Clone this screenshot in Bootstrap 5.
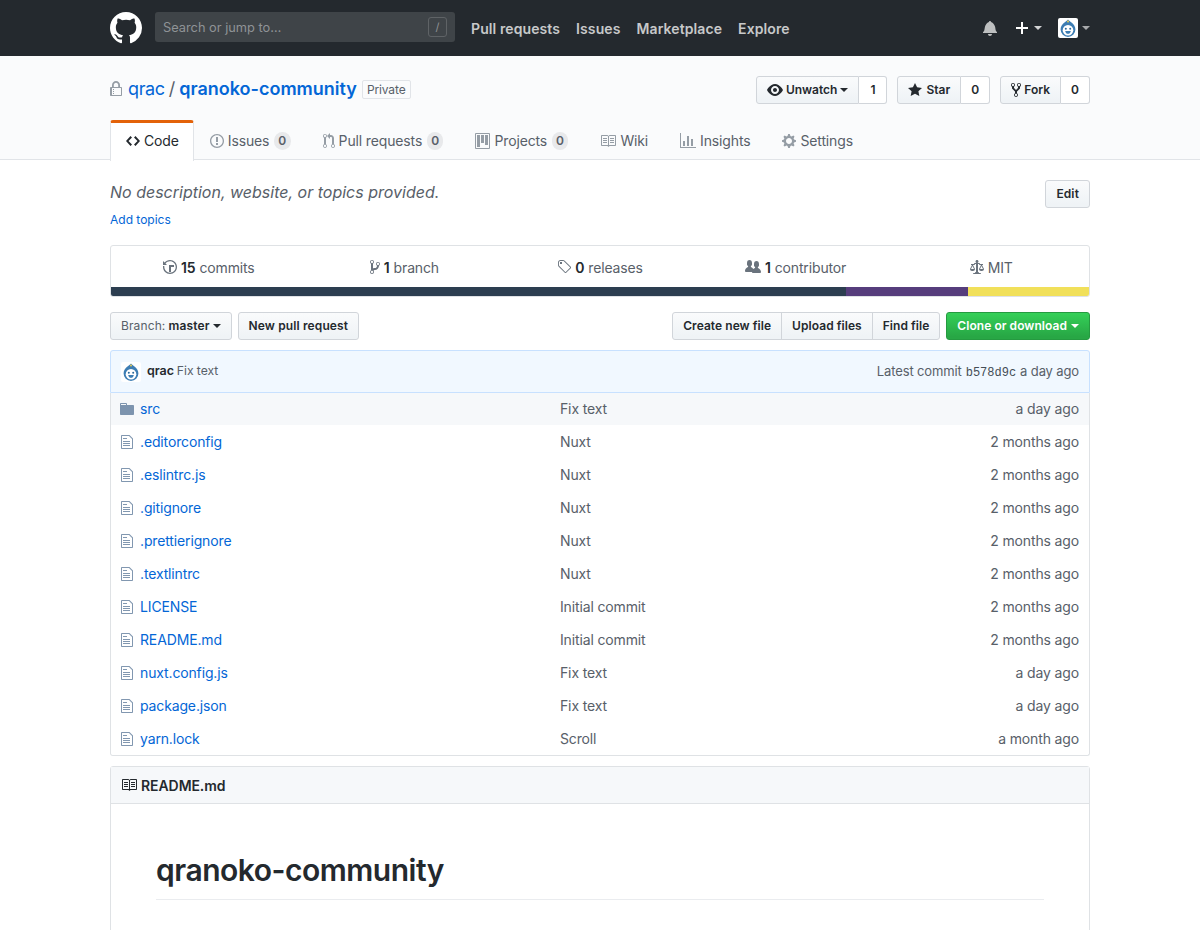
<!doctype html>
<html lang="en">
<head>
<meta charset="utf-8">
<title>qrac/qranoko-community</title>
<link href="https://cdn.jsdelivr.net/npm/bootstrap@5.3.0/dist/css/bootstrap.min.css" rel="stylesheet">
<style>
html,body{height:930px;overflow:hidden}
body{font-family:Inter,"Liberation Sans",sans-serif;font-size:14px;line-height:1.5;color:#24292e;background:#fff;letter-spacing:-.01em}
a{text-decoration:none;color:#0366d6}
.ico{fill:currentColor;vertical-align:text-bottom;flex:none}
.wrap{width:980px;margin:0 auto}
.gh-top{background:#24292e;height:56px;padding:0}
.gh-top .wrap{height:56px;display:flex;align-items:center}
.gh-logo{color:#fff;display:flex;margin-right:13px}
.gh-search{width:300px;height:30px;background:#3f4448;border-radius:3px;color:#8f9396;padding:0 8px;display:flex;align-items:center;justify-content:space-between;margin:0 16px 2px 0;letter-spacing:0;font-size:12.8px}
.gh-search-t{padding-top:2px}
.gh-slash{width:19px;height:20px;border:1px solid #5f6366;border-radius:3px;font-size:11px;text-align:center;line-height:18px;color:#8f9396}
.gh-link{color:rgba(255,255,255,.75);font-weight:600;margin-right:16px;letter-spacing:.1px}
.gh-right{margin-left:auto;display:flex;align-items:center;color:#fff}
.caret-s{display:inline-block;border:4px solid transparent;border-top-color:currentColor;border-bottom:0;vertical-align:middle}
.car-sm{margin-left:3px}
.head-band{background:#fafbfc;border-bottom:1px solid #e1e4e8;height:104px}
.head-top{display:flex;justify-content:space-between;padding-top:20px;height:64px}
.title-line{font-size:18px;line-height:26px;display:flex;align-items:center;color:#586069;height:26px;letter-spacing:0}
.title-line .ico{color:#959da5;margin-right:6px}
.title-line b{font-weight:600}
.owner{letter-spacing:-.02em}
.priv{border:1px solid #e1e4e8;font-size:12px;line-height:17px;padding:0 4px;border-radius:2px;color:#586069;margin-left:5px;margin-top:1px;letter-spacing:-.01em}
.gbtn{display:inline-flex;align-items:center;height:28px;padding:0 10px;font-size:12px;font-weight:600;color:#24292e;background:linear-gradient(#fafbfc,#eff3f6 90%);border:1px solid #d1d5da;border-radius:3px;line-height:20px;white-space:nowrap;letter-spacing:.12px;--bs-btn-border-radius:3px}
.gbtn:hover{color:#24292e;border-color:#d1d5da}
.cnt{display:inline-flex;align-items:center;justify-content:center;height:28px;font-size:12px;font-weight:600;border:1px solid #d1d5da;border-left:0;border-radius:0 3px 3px 0;background:#fff;color:#24292e}
.grp{display:flex;margin-left:10px}
.grp .gbtn{border-radius:3px 0 0 3px;letter-spacing:0}
.grp .gbtn .ico{margin-right:3px}
.grp .gbtn .ico-wide{margin-right:4px}
.tabbar{display:flex;height:40px;border:0}
.tabx{display:flex;align-items:center;height:40px;padding:1px 16px 0;color:#586069;border:0;background:none;border-radius:0}
.tabx .ico{color:#959da5;margin-right:4px}
.tabx.on{background:#fff;color:#24292e;border:1px solid #e1e4e8;border-top:3px solid #e36209;border-bottom:0;border-radius:3px 3px 0 0;padding:0 14px 3px 15px;margin-bottom:-1px;height:41px}
.tabx.on .ico{color:#24292e}
.tnum{display:inline-block;background:rgba(27,31,35,.08);border-radius:20px;font-size:12px;font-weight:600;line-height:1;padding:3px 4.5px;margin-left:4.5px;color:#586069}
.desc-row{display:flex;justify-content:space-between;padding-top:20px;height:85px}
.desc-text{font-size:16px;font-style:italic;color:#586069;line-height:24px;letter-spacing:0}
.add-top{font-size:12px;display:block;margin-top:7px;letter-spacing:0}
.sum-box{border:1px solid #dfe2e5;border-radius:3px;height:52px;overflow:hidden;margin-bottom:15px}
.sum-row{display:flex;height:41px}
.sum-row div{flex:1;display:flex;align-items:center;justify-content:center;color:#586069;padding-top:1px}
.sum-row b{font-weight:600;color:#24292e;margin:0 4px}
.sum-row .ico{color:#6a737d}
.lang-bar{display:flex;height:9px}
.toolbar{display:flex;height:28px;margin-bottom:10px}
.toolbar .gbtn{padding:0 10px}
.new-pr{margin-left:6px}
.btn-grn{color:#fff;background:linear-gradient(#34d058,#28a745 90%);border:1px solid #259a40;margin-left:6px;padding:0 10px;display:inline-flex;align-items:center;height:28px;font-size:12px;font-weight:600;border-radius:3px;white-space:nowrap;letter-spacing:.05px}
.btn-grn:hover{color:#fff}
.tight .gbtn{border-radius:0;margin-left:-1px;letter-spacing:.05px}
.tight .gbtn:first-child{border-radius:3px 0 0 3px;margin-left:0}
.tight .gbtn:last-child{border-radius:0 3px 3px 0}
.tease{background:#f1f8ff;border:1px solid #c8e1ff;border-radius:3px 3px 0 0;height:43px;display:flex;align-items:center;padding:0 10px;font-size:13px;color:#586069;letter-spacing:-.005em}
.tease b{font-weight:600;color:#24292e;margin:0 4px 0 6px;font-size:12.5px}
.tease .tmsg{font-size:12.2px;margin-left:-1px}
.tease .ms-auto{letter-spacing:-.01em}
.tease code{font-family:"Liberation Mono",monospace;font-size:12px;color:#444d56;margin:0 4px;letter-spacing:0}
.files{border:1px solid #dfe2e5;border-top:0;border-radius:0 0 3px 3px;margin-bottom:10px;--bs-list-group-border-radius:0}
.frow{display:flex;align-items:center;height:33px;padding:0 10px 0 9px;border:0;border-top:1px solid #eaecef;background:#fff;color:#586069;border-radius:0}
.frow:first-child{border-top:0;height:32px;padding-bottom:1px;background:#f6f8fa}
.frow .fname{width:440px;display:flex;align-items:center;flex:none}
.frow .fname .ico{color:rgba(3,47,98,.5);margin-right:6px}
.frow .fname .fic{margin-left:1px;margin-right:7px}
.frow .fmsg{flex:1}
.rd{border:1px solid #dfe2e5;border-radius:3px 3px 0 0;height:240px;background:#fff}
.rd-head{background:#f6f8fa;border-bottom:1px solid #dfe2e5;height:37px;display:flex;align-items:center;padding:0 10px;font-weight:600;letter-spacing:-.005em}
.rd-head .ico{margin-right:4px}
.rd-body{padding:48px 45px 45px}
.rd-body h1{font-size:30px;font-weight:600;line-height:1.25;margin:0;padding-bottom:9px;border-bottom:1px solid #eaecef;letter-spacing:-.016em;color:#24292e}
.plus-i{margin-left:19px;margin-right:6px}
.ava-top{margin-left:16px}
.car-a{color:#d3d4d5}
.car-b{color:#a7a9ab;margin-left:4px}
.bell-i{color:#bdbfc0}
.sep-b{color:#586069;font-weight:400}
</style>
</head>
<body>
<svg width="0" height="0" class="d-none">
<symbol id="i-gh" viewBox="0 0 16 16"><path d="M8 0C3.58 0 0 3.58 0 8c0 3.54 2.29 6.53 5.47 7.59.4.07.55-.17.55-.38 0-.19-.01-.82-.01-1.49-2.01.37-2.53-.49-2.69-.94-.09-.23-.48-.94-.82-1.13-.28-.15-.68-.52-.01-.53.63-.01 1.08.58 1.23.82.72 1.21 1.87.87 2.33.66.07-.52.28-.87.51-1.07-1.78-.2-3.64-.89-3.64-3.95 0-.87.31-1.59.82-2.15-.08-.2-.36-1.02.08-2.12 0 0 .67-.21 2.2.82.64-.18 1.32-.27 2-.27.68 0 1.36.09 2 .27 1.53-1.04 2.2-.82 2.2-.82.44 1.1.16 1.92.08 2.12.51.56.82 1.27.82 2.15 0 3.07-1.87 3.75-3.65 3.95.29.25.54.73.54 1.48 0 1.07-.01 1.93-.01 2.2 0 .21.15.46.55.38A8.013 8.013 0 0 0 16 8c0-4.42-3.58-8-8-8z"/></symbol>
<symbol id="i-lock" viewBox="0 0 12 16"><path fill-rule="evenodd" d="M4 13H3v-1h1v1zm8-6v7c0 .55-.45 1-1 1H1c-.55 0-1-.45-1-1V7c0-.55.45-1 1-1h1V4c0-2.2 1.8-4 4-4s4 1.8 4 4v2h1c.55 0 1 .45 1 1zM3.8 6h4.41V4c0-1.22-.98-2.2-2.2-2.2-1.22 0-2.2.98-2.2 2.2v2H3.8zM11 7H2v7h9V7zM4 8H3v1h1V8zm0 2H3v1h1v-1z"/></symbol>
<symbol id="i-eye" viewBox="0 0 16 16"><path fill-rule="evenodd" d="M8.06 2C3 2 0 8 0 8s3 6 8.06 6C13 14 16 8 16 8s-3-6-7.94-6zM8 12c-2.2 0-4-1.78-4-4 0-2.2 1.8-4 4-4 2.22 0 4 1.8 4 4 0 2.22-1.78 4-4 4zm2-4c0 1.11-.89 2-2 2-1.11 0-2-.89-2-2 0-1.11.89-2 2-2 1.11 0 2 .89 2 2z"/></symbol>
<symbol id="i-star" viewBox="0 0 14 16"><path d="M14 6l-4.9-.64L7 1 4.9 5.36 0 6l3.6 3.26L2.67 14 7 11.67 11.33 14l-.93-4.74L14 6z"/></symbol>
<symbol id="i-fork" viewBox="0 0 10 16"><path fill-rule="evenodd" d="M8 1a1.993 1.993 0 0 0-1 3.72V6L5 8 3 6V4.72A1.993 1.993 0 0 0 2 1a1.993 1.993 0 0 0-1 3.72V6.5l3 3v1.78A1.993 1.993 0 0 0 5 15a1.993 1.993 0 0 0 1-3.72V9.5l3-3V4.72A1.993 1.993 0 0 0 8 1zM2 4.2C1.34 4.2.8 3.65.8 3c0-.65.55-1.2 1.2-1.2.65 0 1.2.55 1.2 1.2 0 .65-.55 1.2-1.2 1.2zm3 10c-.66 0-1.2-.55-1.2-1.2 0-.65.55-1.2 1.2-1.2.65 0 1.2.55 1.2 1.2 0 .65-.55 1.2-1.2 1.2zm3-10c-.66 0-1.2-.55-1.2-1.2 0-.65.55-1.2 1.2-1.2.65 0 1.2.55 1.2 1.2 0 .65-.55 1.2-1.2 1.2z"/></symbol>
<symbol id="i-code" viewBox="0 0 14 16"><path d="M9.5 3L8 4.5 11.5 8 8 11.5 9.5 13 14 8 9.5 3zm-5 0L0 8l4.5 5L6 11.5 2.5 8 6 4.5 4.5 3z"/></symbol>
<symbol id="i-issue" viewBox="0 0 14 16"><path fill-rule="evenodd" d="M7 2.3c3.14 0 5.7 2.56 5.7 5.7s-2.56 5.7-5.7 5.7A5.71 5.71 0 0 1 1.3 8c0-3.14 2.56-5.7 5.7-5.7zM7 1C3.14 1 0 4.14 0 8s3.14 7 7 7 7-3.14 7-7-3.14-7-7-7zm1 3H6v5h2V4zm0 6H6v2h2v-2z"/></symbol>
<symbol id="i-pr" viewBox="0 0 12 16"><path fill-rule="evenodd" d="M11 11.28V5c-.03-.78-.34-1.47-.94-2.06C9.46 2.35 8.78 2.03 8 2H7V0L4 3l3 3V4h1c.27.02.48.11.69.31.21.2.3.42.31.69v6.28A1.993 1.993 0 0 0 10 15a1.993 1.993 0 0 0 1-3.72zm-1 2.92c-.66 0-1.2-.55-1.2-1.2 0-.65.55-1.2 1.2-1.2.65 0 1.2.55 1.2 1.2 0 .65-.55 1.2-1.2 1.2zM4 3c0-1.11-.89-2-2-2a1.993 1.993 0 0 0-1 3.72v6.56A1.993 1.993 0 0 0 2 15a1.993 1.993 0 0 0 1-3.72V4.72c.59-.34 1-.98 1-1.72zm-.8 10c0 .66-.55 1.2-1.2 1.2-.65 0-1.2-.55-1.2-1.2 0-.65.55-1.2 1.2-1.2.65 0 1.2.55 1.2 1.2zM2 4.2C1.34 4.2.8 3.65.8 3c0-.65.55-1.2 1.2-1.2.65 0 1.2.55 1.2 1.2 0 .65-.55 1.2-1.2 1.2z"/></symbol>
<symbol id="i-proj" viewBox="0 0 15 16"><path fill-rule="evenodd" d="M10 12h3V2h-3v10zm-4-2h3V2H6v8zm-4 4h3V2H2v12zm-1 1h13V1H1v14zM14 0H1a1 1 0 0 0-1 1v14a1 1 0 0 0 1 1h13a1 1 0 0 0 1-1V1a1 1 0 0 0-1-1z"/></symbol>
<symbol id="i-book" viewBox="0 0 16 16"><path fill-rule="evenodd" d="M3 5h4v1H3V5zm0 3h4V7H3v1zm0 2h4V9H3v1zm11-5h-4v1h4V5zm0 2h-4v1h4V7zm0 2h-4v1h4V9zm2-6v9c0 .55-.45 1-1 1H9.5l-1 1-1-1H2c-.55 0-1-.45-1-1V3c0-.55.45-1 1-1h5.5l1 1 1-1H15c.55 0 1 .45 1 1zm-8 .5L7.5 3H2v9h6V3.5zm7-.5H9.5l-.5.5V12h6V3z"/></symbol>
<symbol id="i-graph" viewBox="0 0 16 16"><path d="M16 14v1H0V0h1v14h15zM5 13H3V8h2v5zm4 0H7V3h2v10zm4 0h-2V6h2v7z"/></symbol>
<symbol id="i-gear" viewBox="0 0 14 16"><path fill-rule="evenodd" d="M14 8.77v-1.6l-1.94-.64-.45-1.09.88-1.84-1.13-1.13-1.81.91-1.09-.45-.69-1.92h-1.6l-.63 1.94-1.11.45-1.84-.88-1.13 1.13.91 1.81-.45 1.09L0 7.23v1.59l1.94.64.45 1.09-.88 1.84 1.13 1.13 1.81-.91 1.09.45.69 1.92h1.59l.63-1.94 1.11-.45 1.84.88 1.13-1.13-.92-1.81.47-1.09L14 8.75v.02zM7 11c-1.66 0-3-1.34-3-3s1.34-3 3-3 3 1.34 3 3-1.34 3-3 3z"/></symbol>
<symbol id="i-hist" viewBox="0 0 14 16"><path fill-rule="evenodd" d="M8 13H6V6h5v2H8v5zM7 1C4.81 1 2.87 2.02 1.59 3.59L0 2v4h4L2.5 4.5C3.55 3.17 5.17 2.3 7 2.3c3.14 0 5.7 2.56 5.7 5.7s-2.56 5.7-5.7 5.7A5.71 5.71 0 0 1 1.3 8c0-.34.03-.67.09-1H.08C.03 7.33 0 7.66 0 8c0 3.86 3.14 7 7 7s7-3.14 7-7-3.14-7-7-7z"/></symbol>
<symbol id="i-branch" viewBox="0 0 10 16"><path fill-rule="evenodd" d="M10 5c0-1.11-.89-2-2-2a1.993 1.993 0 0 0-1 3.72v.3c-.02.52-.23.98-.63 1.38-.4.4-.86.61-1.38.63-.83.02-1.48.16-2 .45V4.72a1.993 1.993 0 0 0-1-3.72C.88 1 0 1.89 0 3a2 2 0 0 0 1 1.72v6.56c-.59.35-1 .99-1 1.72 0 1.11.89 2 2 2 1.11 0 2-.89 2-2 0-.53-.2-1-.53-1.36.09-.06.48-.41.59-.47.25-.11.56-.17.94-.17 1.05-.05 1.95-.45 2.75-1.25S8.95 7.77 9 6.73h-.02C9.59 6.37 10 5.73 10 5zM2 1.8c.66 0 1.2.55 1.2 1.2 0 .65-.55 1.2-1.2 1.2C1.35 4.2.8 3.65.8 3c0-.65.55-1.2 1.2-1.2zm0 12.41c-.66 0-1.2-.55-1.2-1.2 0-.65.55-1.2 1.2-1.2.65 0 1.2.55 1.2 1.2 0 .65-.55 1.2-1.2 1.2zm6-8c-.66 0-1.2-.55-1.2-1.2 0-.65.55-1.2 1.2-1.2.65 0 1.2.55 1.2 1.2 0 .65-.55 1.2-1.2 1.2z"/></symbol>
<symbol id="i-tag" viewBox="0 0 14 16"><path fill-rule="evenodd" d="M7.73 1.73C7.26 1.26 6.62 1 5.96 1H3.5C2.13 1 1 2.13 1 3.5v2.47c0 .66.27 1.3.73 1.77l6.06 6.06c.39.39 1.02.39 1.41 0l4.59-4.59a.996.996 0 0 0 0-1.41L7.73 1.73zM2.38 7.09c-.31-.3-.47-.7-.47-1.13V3.5c0-.88.72-1.59 1.59-1.59h2.47c.42 0 .83.16 1.13.47l6.14 6.13-4.73 4.73-6.13-6.15zM3.01 3h2v2H3V3h.01z"/></symbol>
<symbol id="i-org" viewBox="0 0 16 16"><path d="M16 12.999c0 .439-.45 1-1 1H7.995c-.539 0-.994-.447-.995-.999H1c-.54 0-1-.561-1-1 0-2.634 3-4 3-4s.229-.409 0-1c-.841-.621-1.058-.59-1-3 .058-2.419 1.367-3 2.5-3s2.442.58 2.5 3c.058 2.41-.159 2.379-1 3-.229.59 0 1 0 1s1.549.711 2.42 2.088C9.196 9.369 10 8.999 10 8.999s.229-.409 0-1c-.841-.62-1.058-.59-1-3 .058-2.419 1.367-3 2.5-3s2.437.581 2.495 3c.059 2.41-.158 2.38-1 3-.229.59 0 1 0 1s3.005 1.366 3.005 4z"/></symbol>
<symbol id="i-law" viewBox="0 0 14 16"><path fill-rule="evenodd" d="M7 4c-.83 0-1.5-.67-1.5-1.5S6.17 1 7 1s1.5.67 1.5 1.5S7.83 4 7 4zm7 6c0 1.11-.89 2-2 2h-1c-1.11 0-2-.89-2-2l2-4h-1c-.55 0-1-.45-1-1H8v8c.42 0 1 .45 1 1h1c.42 0 1 .45 1 1H3c0-.55.58-1 1-1h1c0-.55.58-1 1-1h.03L6 5H5c0 .55-.45 1-1 1H3l2 4c0 1.11-.89 2-2 2H2c-1.11 0-2-.89-2-2l2-4H1V5h3c0-.55.45-1 1-1h4c.55 0 1 .45 1 1h3v1h-1l2 4zM2.5 7L1 10h3L2.5 7zM13 10l-1.5-3-1.5 3h3z"/></symbol>
<symbol id="i-file" viewBox="0 0 12 16"><path fill-rule="evenodd" d="M6 5H2V4h4v1zM2 8h7V7H2v1zm0 2h7V9H2v1zm0 2h7v-1H2v1zm10-7.5V14c0 .55-.45 1-1 1H1c-.55 0-1-.45-1-1V2c0-.55.45-1 1-1h7.5L12 4.5zM11 5L8 2H1v12h10V5z"/></symbol>
<symbol id="i-dir" viewBox="0 0 14 16"><path fill-rule="evenodd" d="M13 4H7V3c0-.66-.31-1-1-1H1c-.55 0-1 .45-1 1v10c0 .55.45 1 1 1h12c.55 0 1-.45 1-1V5c0-.55-.45-1-1-1zM6 4H1V3h5v1z"/></symbol>
<symbol id="i-bell" viewBox="0 0 14 16"><path d="M13.99 11.991v1H0v-1l.73-.58c.769-.769.809-2.547 1.189-4.416.77-3.767 4.077-4.996 4.077-4.996 0-.55.45-1 1-1s1 .45 1 1c0 0 3.387 1.229 4.156 4.996.38 1.879.42 3.657 1.19 4.417l.659.58h-.01zM6.995 15.99c1.11 0 2-.89 2-2h-4c0 1.11.89 2 2 2z"/></symbol>
<symbol id="i-plus" viewBox="0 0 12 16"><path d="M12 9H7v5H5V9H0V7h5V2h2v5h5v2z"/></symbol>
<symbol id="i-ava" viewBox="0 0 20 20"><rect width="20" height="20" rx="2" fill="#fff"/><path d="M10 1.6C8.9 3.4 2.6 6 2.6 11.6a7.4 7.4 0 0 0 14.8 0C17.4 6 11.1 3.4 10 1.6z" fill="#3d7db3"/><circle cx="10" cy="3.4" r="1" fill="#e6c84f"/><circle cx="10" cy="12.2" r="5.3" fill="#fff"/><circle cx="7.8" cy="10.8" r="1" fill="#2f6a9a"/><circle cx="12.2" cy="10.8" r="1" fill="#2f6a9a"/><path d="M7.2 12.9h5.6c-.3 2-1.6 2.8-2.8 2.8s-2.5-.8-2.8-2.8z" fill="#3d7db3"/></symbol>
</svg>

<nav class="navbar gh-top">
  <div class="wrap">
    <a class="gh-logo" href="#"><svg class="ico" width="32" height="32"><use href="#i-gh"/></svg></a>
    <div class="gh-search"><span class="gh-search-t">Search or jump to…</span><span class="gh-slash">/</span></div>
    <a class="gh-link" href="#">Pull requests</a>
    <a class="gh-link" href="#">Issues</a>
    <a class="gh-link" href="#">Marketplace</a>
    <a class="gh-link" href="#">Explore</a>
    <div class="gh-right">
      <svg class="ico bell-i" width="14" height="16"><use href="#i-bell"/></svg>
      <svg class="ico plus-i" width="12" height="16"><use href="#i-plus"/></svg>
      <span class="caret-s car-a"></span>
      <svg class="ico ava-top" width="20" height="20"><use href="#i-ava"/></svg>
      <span class="caret-s car-b"></span>
    </div>
  </div>
</nav>

<div class="head-band">
  <div class="wrap">
    <div class="head-top">
      <div class="title-line">
        <svg class="ico" width="12" height="16"><use href="#i-lock"/></svg>
        <a class="owner" href="#">qrac</a><span class="mx-1">/</span><a href="#"><b>qranoko-community</b></a>
        <span class="priv">Private</span>
      </div>
      <div class="d-flex">
        <div class="grp"><a class="btn gbtn" href="#"><svg class="ico" width="16" height="16"><use href="#i-eye"/></svg>Unwatch<span class="caret-s car-sm"></span></a><a class="cnt" style="width:28px" href="#">1</a></div>
        <div class="grp"><a class="btn gbtn" href="#"><svg class="ico ico-wide" width="14" height="16"><use href="#i-star"/></svg>Star</a><a class="cnt" style="width:29px" href="#">0</a></div>
        <div class="grp"><a class="btn gbtn" href="#"><svg class="ico" width="10" height="16"><use href="#i-fork"/></svg>Fork</a><a class="cnt" style="width:29px" href="#">0</a></div>
      </div>
    </div>
    <div class="nav tabbar">
      <a class="nav-link tabx on" href="#"><svg class="ico" width="14" height="16"><use href="#i-code"/></svg>Code</a>
      <a class="nav-link tabx" href="#"><svg class="ico" width="14" height="16"><use href="#i-issue"/></svg>Issues<span class="tnum">0</span></a>
      <a class="nav-link tabx" href="#"><svg class="ico" width="12" height="16"><use href="#i-pr"/></svg>Pull requests<span class="tnum">0</span></a>
      <a class="nav-link tabx" href="#"><svg class="ico" width="15" height="16"><use href="#i-proj"/></svg>Projects<span class="tnum">0</span></a>
      <a class="nav-link tabx" href="#"><svg class="ico" width="16" height="16"><use href="#i-book"/></svg>Wiki</a>
      <a class="nav-link tabx" href="#"><svg class="ico" width="16" height="16"><use href="#i-graph"/></svg>Insights</a>
      <a class="nav-link tabx" href="#"><svg class="ico" width="14" height="16"><use href="#i-gear"/></svg>Settings</a>
    </div>
  </div>
</div>

<div class="wrap">
  <div class="desc-row">
    <div>
      <div class="desc-text">No description, website, or topics provided.</div>
      <a class="add-top" href="#">Add topics</a>
    </div>
    <div><a class="btn gbtn" href="#">Edit</a></div>
  </div>

  <div class="sum-box">
    <div class="sum-row">
      <div><svg class="ico" width="14" height="16"><use href="#i-hist"/></svg><b>15</b>commits</div>
      <div><svg class="ico" width="10" height="16"><use href="#i-branch"/></svg><b>1</b>branch</div>
      <div><svg class="ico" width="14" height="16"><use href="#i-tag"/></svg><b>0</b>releases</div>
      <div><svg class="ico" width="16" height="16"><use href="#i-org"/></svg><b>1</b>contributor</div>
      <div><svg class="ico me-1" width="14" height="16"><use href="#i-law"/></svg>MIT</div>
    </div>
    <div class="lang-bar">
      <div style="width:75.15%;background:#2c3e50"></div>
      <div style="width:12.47%;background:#563d7c"></div>
      <div style="width:12.38%;background:#f1e05a"></div>
    </div>
  </div>

  <div class="toolbar">
    <a class="btn gbtn" href="#"><span class="sep-b">Branch:</span>&nbsp;master<span class="caret-s car-sm"></span></a>
    <a class="btn gbtn new-pr" href="#">New pull request</a>
    <div class="ms-auto d-flex tight">
      <a class="btn gbtn" href="#">Create new file</a>
      <a class="btn gbtn" href="#">Upload files</a>
      <a class="btn gbtn" href="#">Find file</a>
    </div>
    <a class="btn btn-grn" href="#">Clone or download<span class="caret-s ms-1"></span></a>
  </div>

  <div class="tease">
    <svg class="ico" width="20" height="20"><use href="#i-ava"/></svg>
    <b>qrac</b><span class="tmsg">Fix text</span>
    <span class="ms-auto">Latest commit<code>b578d9c</code>a day ago</span>
  </div>
  <div class="list-group files">
    <div class="list-group-item frow"><div class="fname"><svg class="ico" width="14" height="16"><use href="#i-dir"/></svg><a href="#">src</a></div><div class="fmsg">Fix text</div><div>a day ago</div></div>
    <div class="list-group-item frow"><div class="fname"><svg class="ico fic" width="12" height="16"><use href="#i-file"/></svg><a href="#">.editorconfig</a></div><div class="fmsg">Nuxt</div><div>2 months ago</div></div>
    <div class="list-group-item frow"><div class="fname"><svg class="ico fic" width="12" height="16"><use href="#i-file"/></svg><a href="#">.eslintrc.js</a></div><div class="fmsg">Nuxt</div><div>2 months ago</div></div>
    <div class="list-group-item frow"><div class="fname"><svg class="ico fic" width="12" height="16"><use href="#i-file"/></svg><a href="#">.gitignore</a></div><div class="fmsg">Nuxt</div><div>2 months ago</div></div>
    <div class="list-group-item frow"><div class="fname"><svg class="ico fic" width="12" height="16"><use href="#i-file"/></svg><a href="#">.prettierignore</a></div><div class="fmsg">Nuxt</div><div>2 months ago</div></div>
    <div class="list-group-item frow"><div class="fname"><svg class="ico fic" width="12" height="16"><use href="#i-file"/></svg><a href="#">.textlintrc</a></div><div class="fmsg">Nuxt</div><div>2 months ago</div></div>
    <div class="list-group-item frow"><div class="fname"><svg class="ico fic" width="12" height="16"><use href="#i-file"/></svg><a href="#">LICENSE</a></div><div class="fmsg">Initial commit</div><div>2 months ago</div></div>
    <div class="list-group-item frow"><div class="fname"><svg class="ico fic" width="12" height="16"><use href="#i-file"/></svg><a href="#">README.md</a></div><div class="fmsg">Initial commit</div><div>2 months ago</div></div>
    <div class="list-group-item frow"><div class="fname"><svg class="ico fic" width="12" height="16"><use href="#i-file"/></svg><a href="#">nuxt.config.js</a></div><div class="fmsg">Fix text</div><div>a day ago</div></div>
    <div class="list-group-item frow"><div class="fname"><svg class="ico fic" width="12" height="16"><use href="#i-file"/></svg><a href="#">package.json</a></div><div class="fmsg">Fix text</div><div>a day ago</div></div>
    <div class="list-group-item frow"><div class="fname"><svg class="ico fic" width="12" height="16"><use href="#i-file"/></svg><a href="#">yarn.lock</a></div><div class="fmsg">Scroll</div><div>a month ago</div></div>
  </div>

  <div class="rd">
    <div class="rd-head"><svg class="ico" width="16" height="16"><use href="#i-book"/></svg>README.md</div>
    <div class="rd-body"><h1>qranoko-community</h1></div>
  </div>
</div>
<script src="https://cdn.jsdelivr.net/npm/bootstrap@5.3.0/dist/js/bootstrap.bundle.min.js"></script>
</body>
</html>
